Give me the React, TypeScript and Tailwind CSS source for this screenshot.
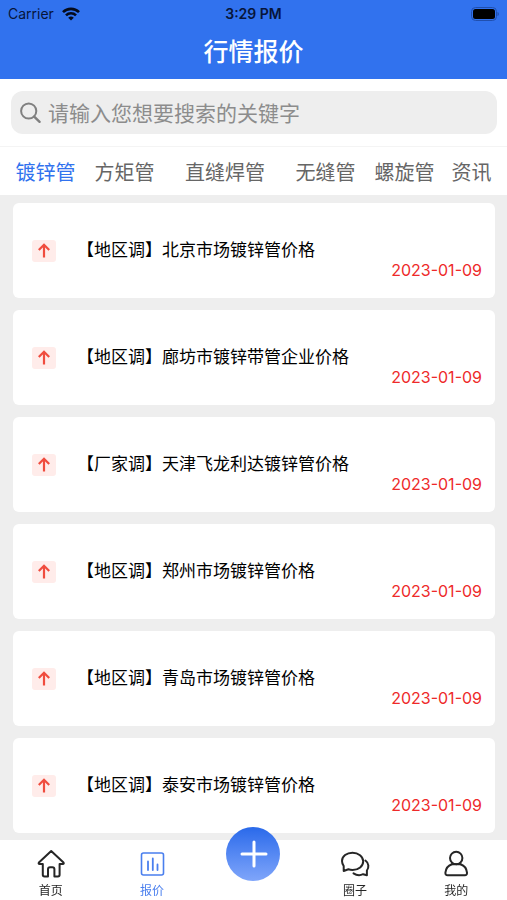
import type { ReactNode } from 'react';

const tabs = ['镀锌管', '方矩管', '直缝焊管', '无缝管', '螺旋管', '资讯'];

const quotes = [
  { title: '【地区调】北京市场镀锌管价格', date: '2023-01-09' },
  { title: '【地区调】廊坊市镀锌带管企业价格', date: '2023-01-09' },
  { title: '【厂家调】天津飞龙利达镀锌管价格', date: '2023-01-09' },
  { title: '【地区调】郑州市场镀锌管价格', date: '2023-01-09' },
  { title: '【地区调】青岛市场镀锌管价格', date: '2023-01-09' },
  { title: '【地区调】泰安市场镀锌管价格', date: '2023-01-09' },
];

function StatusBar() {
  return (
    <div className="grid h-7 grid-cols-3 items-center px-2 text-sm text-[#07153a]">
      <div className="flex items-center gap-2">
        <span>Carrier</span>
        <svg className="h-[14px] w-[18px]" viewBox="0 0 18 14" fill="none" stroke="#050b1c" strokeWidth="2.6" aria-hidden="true">
          <path d="M1 5.2a11.3 11.3 0 0 1 16 0" />
          <path d="M4 8.4a7 7 0 0 1 10 0" />
          <path d="M9 13.6 6.2 10.8a4 4 0 0 1 5.6 0z" fill="#050b1c" stroke="none" />
        </svg>
      </div>
      <span className="text-center font-semibold">3:29 PM</span>
      <svg className="h-[14px] w-[28px] justify-self-end" viewBox="0 0 28 14" aria-hidden="true">
        <rect x="0.5" y="0.5" width="25" height="13" rx="4" fill="none" stroke="#204fae" />
        <rect x="2" y="2" width="22" height="10" rx="2.5" fill="#000" />
        <path d="M26.500 5v4c1.800-.6 1.800-3.400 0-4z" fill="#204fae" />
      </svg>
    </div>
  );
}

function SearchBar() {
  return (
    <form className="border-b border-[#f4f4f4] bg-white pt-3 pr-[10px] pb-3 pl-[11px]" onSubmit={(e) => e.preventDefault()}>
      <label className="flex h-[43px] items-center rounded-[12px] bg-[#eeeeee] pr-3 pl-2">
        <svg className="h-6 w-[29px] shrink-0" viewBox="0 0 29 24" fill="none" stroke="#808080" strokeWidth="2" strokeLinecap="round" aria-hidden="true">
          <circle cx="9.700" cy="10" r="7.600" />
          <path d="m15.200 15.600 5.400 5.200" strokeWidth="2.400" />
        </svg>
        <input
          type="search"
          aria-label="搜索"
          placeholder="请输入您想要搜索的关键字"
          className="min-w-0 flex-1 bg-transparent pt-[2px] text-[21px] text-[#333333] outline-none placeholder:text-[#8c8c8c]"
        />
      </label>
    </form>
  );
}

function NavItem({ label, active, children }: { label: string; active?: boolean; children: ReactNode }) {
  return (
    <button type="button" className={`flex flex-col items-center pt-[9px] text-xs ${active ? 'text-[#4a7fee]' : 'text-[#262626]'}`}>
      <svg className="h-[30px] w-[30px]" viewBox="0 0 30 30" fill="none" stroke="currentColor" strokeWidth="2" strokeLinecap="round" strokeLinejoin="round" aria-hidden="true">
        {children}
      </svg>
      <span className="leading-6">{label}</span>
    </button>
  );
}

export default function App() {
  return (
    <div className="flex min-h-screen flex-col bg-[#eeeeee] font-['Inter','Noto_Sans_CJK_SC',sans-serif]">
      <header className="bg-[#3172ee] pb-[5px]">
        <StatusBar />
        <h1 className="pt-[3px] text-center text-[25px] leading-[43px] font-medium text-white">行情报价</h1>
      </header>

      <SearchBar />

      <nav className="grid h-12 grid-cols-[79fr_79fr_122fr_79fr_79fr_55fr] bg-white pr-2 pl-[6px]">
        {tabs.map((tab, i) => (
          <button key={tab} type="button" className={`pt-[3px] text-[20px] whitespace-nowrap ${i === 0 ? 'text-[#3172ee]' : 'text-[#666666]'}`}>
            {tab}
          </button>
        ))}
      </nav>

      <main className="flex-1 pt-2 pr-3 pb-[6px] pl-[13px]">
        <ul className="flex flex-col gap-3">
          {quotes.map((quote) => (
            <li key={quote.title}>
              <a href="#" className="flex h-[95px] items-center rounded-[6px] bg-white pr-[13px] pl-[19px]">
                <svg className="h-[22px] w-6 shrink-0" viewBox="0 0 24 22" fill="none" aria-hidden="true">
                  <rect width="24" height="22" rx="3" fill="#ffecea" />
                  <path d="M12 17.500V5M6.800 10l5.200-5.200L17.200 10" stroke="#f04c3e" strokeWidth="2.200" />
                </svg>
                <span className="ml-[21px] pt-px text-[17px] whitespace-nowrap text-black">{quote.title}</span>
                <time className="ml-auto self-end pb-[18px] text-[16px] leading-5 whitespace-nowrap text-[#ee2a2a]">{quote.date}</time>
              </a>
            </li>
          ))}
        </ul>
      </main>

      <nav className="sticky bottom-0 grid h-[60px] grid-cols-5 bg-white">
        <NavItem label="首页">
          <path d="M15.200 2 2.900 13.600c-.6.800-.2 1.400.6 1.400h3.300v10.700c0 1.200.5 1.700 1.700 1.700H12v-7.200c0-1.300.7-2 2-2h2.400c1.300 0 2 .7 2 2v7.200h3.500c1.200 0 1.700-.5 1.700-1.700V15h3.300c.8 0 1.200-.6.600-1.400z" />
        </NavItem>
        <NavItem label="报价" active>
          <rect x="4.500" y="4" width="22" height="22" rx="2" strokeWidth="1.600" />
          <path d="M11 12.500v8.500M15.800 9.500V21M20.500 15.500V21" strokeWidth="1.800" />
        </NavItem>
        <button type="button" aria-label="发布" className="-mt-[13px] h-[54px] w-[54px] justify-self-center rounded-full bg-linear-to-b from-[#2969ea] to-[#7fa5fa]">
          <svg className="h-full w-full" viewBox="0 0 54 54" fill="none" stroke="#fff" strokeWidth="3" strokeLinecap="round" aria-hidden="true">
            <path d="M28 15v24M16 27h24" />
          </svg>
        </button>
        <NavItem label="圈子">
          <path d="M3.700 22v-5C2.600 15.300 2 13.700 2 12c0-4.800 4.700-8.300 10.500-8.300S23.200 7.400 23.200 12.300s-4.600 8.700-10.600 8.700c-1.500 0-2.900-.2-4.200-.7z" />
          <path d="M25.400 11.500c3.600 2.600 3.700 7.200 1.500 10v4.800l-3.800-1.100c-3 1.400-6.800 1-9.600-.9" />
        </NavItem>
        <NavItem label="我的">
          <circle cx="15.200" cy="9" r="6.200" />
          <path d="M10.800 15.200C7 16.500 4.800 19.700 4.400 23.700c-.1 1.700.7 2.500 2.200 2.500h17.200c1.500 0 2.300-.8 2.200-2.500-.4-4-2.600-7.200-6.400-8.500" />
          <path d="M10.800 15.200h8.800" />
        </NavItem>
      </nav>
    </div>
  );
}
